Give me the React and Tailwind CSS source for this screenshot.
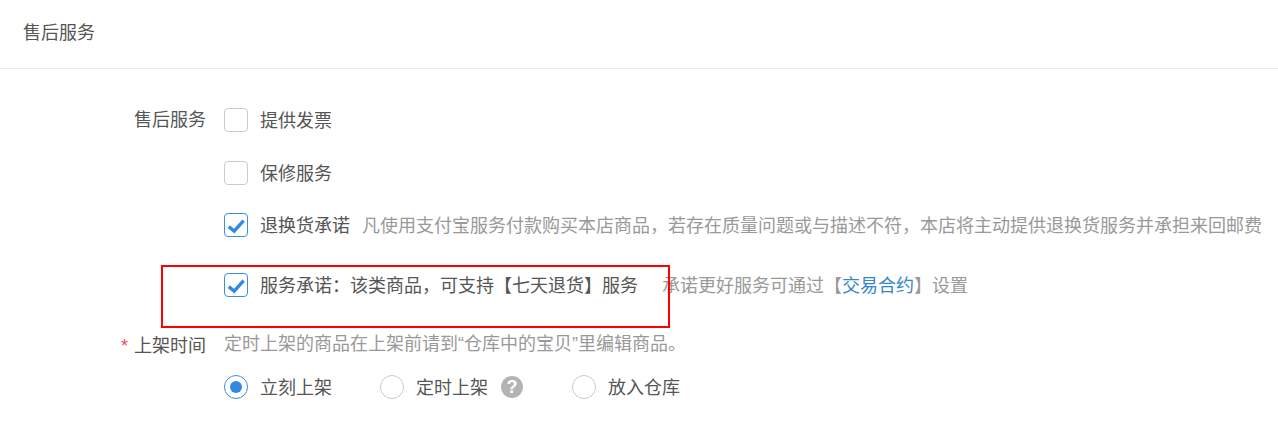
import React from "react";

const font = { fontFamily: '"Liberation Sans", "Noto Sans CJK SC", sans-serif' };

function Checkbox({ checked }) {
  return (
    <span className={`w-6 h-6 rounded-[4px] border flex items-center justify-center shrink-0 bg-white ${checked ? "border-[#3a8ee6]" : "border-[#c9cad4]"}`}>
      {checked && (
        <svg width="22" height="22" viewBox="0 0 22 22">
          <path d="M3.8 12.6 L9.2 17.2 L18.6 6.6" fill="none" stroke="#3388e0" strokeWidth="3.4" />
        </svg>
      )}
    </span>
  );
}

function Radio({ checked }) {
  return (
    <span className={`w-6 h-6 rounded-full border flex items-center justify-center shrink-0 bg-white ${checked ? "border-[#3a8ee6]" : "border-[#c9cad4]"}`}>
      {checked && <span className="w-3 h-3 rounded-full bg-[#3388e0]"></span>}
    </span>
  );
}

function CheckRow({ checked, label, className, children }) {
  return (
    <div className={`flex items-center h-6 ${className}`}>
      <Checkbox checked={checked} />
      <span className="ml-3 mt-0.5 text-[#555]">{label}</span>
      {children}
    </div>
  );
}

export default function App() {
  return (
    <div className="relative w-[1278px] h-[444px] bg-white text-[18px] leading-6 overflow-hidden" style={font}>
      <div className="h-[69px] border-b border-[#ebebeb] pl-[23px] pt-[21px] text-[#555]">售后服务</div>

      <div className="flex pt-[39px]">
        <div className="w-[206px] text-right text-[#555] shrink-0">售后服务</div>
        <div className="ml-[18px] flex-1 min-w-0">
          <CheckRow label="提供发票" />
          <CheckRow label="保修服务" className="mt-[29px]" />
          <CheckRow checked label="退换货承诺" className="mt-[28px]">
            <span className="ml-3 mt-0.5 text-[#999] whitespace-nowrap">凡使用支付宝服务付款购买本店商品，若存在质量问题或与描述不符，本店将主动提供退换货服务并承担来回邮费</span>
          </CheckRow>
          <CheckRow checked label="服务承诺：该类商品，可支持【七天退货】服务" className="mt-[36px]">
            <span className="ml-6 mt-0.5 text-[#999] whitespace-nowrap">
              承诺更好服务可通过【<span className="text-[#3388cc]">交易合约</span>】设置
            </span>
          </CheckRow>
        </div>
      </div>

      <div className="flex mt-[35px]">
        <div className="w-[206px] mt-0.5 text-right text-[#555] shrink-0">
          <span className="text-[#f5475f] mr-1.5">*</span>上架时间
        </div>
        <div className="ml-[18px]">
          <div className="text-[#999]">定时上架的商品在上架前请到“仓库中的宝贝”里编辑商品。</div>
          <div className="flex items-center h-6 mt-[19px] text-[#555]">
            <Radio checked />
            <span className="ml-3 mt-0.5">立刻上架</span>
            <span className="ml-12"><Radio /></span>
            <span className="ml-3 mt-0.5">定时上架</span>
            <span className="ml-[13px] w-[22px] h-[22px] rounded-full bg-[#b3b3b3] text-white text-[18px] font-bold flex items-center justify-center">?</span>
            <span className="ml-[49px]"><Radio /></span>
            <span className="ml-3 mt-0.5">放入仓库</span>
          </div>
        </div>
      </div>

      <div className="absolute left-[161px] top-[265px] w-[509px] h-[63px] border-2 border-[#f00]"></div>
    </div>
  );
}
